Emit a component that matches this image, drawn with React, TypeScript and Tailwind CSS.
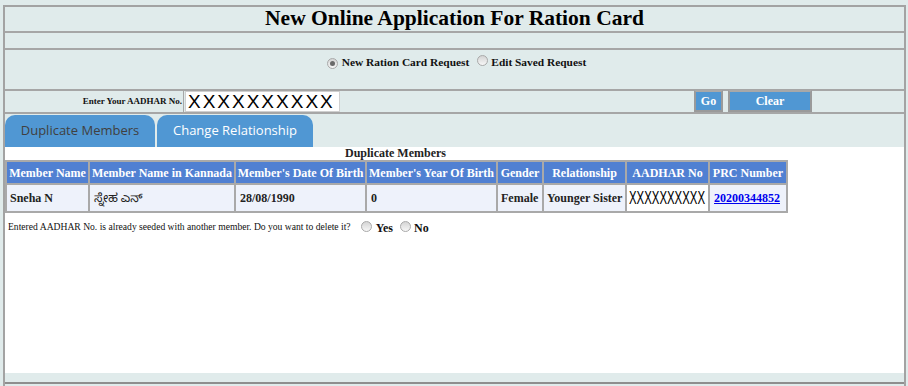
import React from "react";

function Radio({ checked }: { checked?: boolean }) {
  return (
    <span className="inline-flex items-center justify-center w-[11px] h-[11px] rounded-full border border-[#a9a9a9] bg-linear-to-b from-[#d4d4d4] to-[#f7f7f7] shrink-0">
      {checked ? <span className="block w-[5px] h-[5px] rounded-full bg-[#6a6a6a]" /> : null}
    </span>
  );
}

const serif = "font-['Liberation_Serif','Times_New_Roman',serif]";

export default function App() {
  const headers = [
    "Member Name",
    "Member Name in Kannada",
    "Member's Date Of Birth",
    "Member's Year Of Birth",
    "Gender",
    "Relationship",
    "AADHAR No",
    "PRC Number",
  ];
  const widths = [83, 146, 131, 131, 46, 83, 83, 78];
  return (
    <div className={`w-[908px] h-[386px] overflow-hidden bg-[#e0ebeb] pt-[5px] ${serif}`}>
      <div className="ml-[3px] w-[903px] h-[381px] border-l-2 border-r-2 border-t-2 border-[#a3a3a3] flex flex-col">
        {/* Title */}
        <div className="h-[26px] border-b-2 border-[#a6a6a6] flex items-center justify-center">
          <h1 className="text-[21.5px] font-bold text-black leading-none">
            New Online Application For Ration Card
          </h1>
        </div>
        {/* empty row */}
        <div className="h-[17px] border-b-2 border-[#a6a6a6]" />
        {/* radio row */}
        <div className="h-[41px] border-b-2 border-[#a6a6a6] flex justify-center pt-[6px]">
          <div className="flex items-center h-[14px] text-[11.4px] font-bold text-[#111] ml-[4px]">
            <Radio checked />
            <span className="ml-[4px]">New Ration Card Request</span>
            <span className="ml-[8px]">
              <Radio />
            </span>
            <span className="ml-[3px]">Edit Saved Request</span>
          </div>
        </div>
        {/* aadhar row */}
        <div className="h-[23px] border-b-2 border-[#a6a6a6] flex items-stretch">
          <div className="w-[179px] border-r border-[#a6a6a6] flex items-center justify-end pr-[1px]">
            <span className="text-[9px] font-bold text-[#111] leading-none">Enter Your AADHAR No.</span>
          </div>
          <div className="w-[155px] flex items-center ml-[1px]">
            <div className="w-[155px] h-[21px] bg-white border border-[#cfcfcf] flex items-center pl-[2px] overflow-hidden">
              <span className="font-['Liberation_Sans',Arial,sans-serif] text-[19px] tracking-[2px] text-black leading-none">
                XXXXXXXXXX
              </span>
            </div>
          </div>
          <div className="flex-1 flex items-end pl-[354px] gap-[5px]">
            <button className="w-[29px] h-[22px] bg-[#5097d3] border-2 border-[#9a9a9a] border-t-[#a8a8a8] text-white text-[12px] font-bold leading-none">
              Go
            </button>
            <button className="w-[84px] h-[22px] bg-[#5097d3] border-2 border-[#9a9a9a] border-t-[#a8a8a8] text-white text-[12px] font-bold leading-none">
              Clear
            </button>
          </div>
        </div>
        {/* tabs */}
        <div className="h-[33px] flex items-end gap-[2px] pt-[1px] font-['Open_Sans','Noto_Sans',sans-serif] text-[13px]">
          <div className="w-[150px] h-[32px] rounded-t-[10px] bg-[#5097d3] flex items-center justify-center text-[#404040]">
            Duplicate Members
          </div>
          <div className="w-[156px] h-[32px] rounded-t-[10px] bg-[#5097d3] flex items-center justify-center text-white">
            Change Relationship
          </div>
        </div>
        {/* content */}
        <div className="h-[226px] bg-white">
          <div className="w-[781px]">
            <div className="h-[13px] text-center text-[12px] font-bold text-[#222] leading-[13px]">
              Duplicate Members
            </div>
            <table className="table-fixed border-collapse w-[781px] text-[12px]">
              <colgroup>
                {widths.map((w, i) => (
                  <col key={i} style={{ width: w }} />
                ))}
              </colgroup>
              <thead>
                <tr className="h-[23px] bg-[#5080d2]">
                  {headers.map((h) => (
                    <th key={h} className="border-2 border-[#a9a9a9] text-white font-bold whitespace-nowrap px-0 text-center leading-none">
                      {h}
                    </th>
                  ))}
                </tr>
              </thead>
              <tbody>
                <tr className="h-[28px] bg-[#eef2fb] text-[#222] font-bold">
                  <td className="border-2 border-[#a9a9a9] pl-[3px] whitespace-nowrap">Sneha N</td>
                  <td className="border-2 border-[#a9a9a9] pl-[4px] whitespace-nowrap font-normal font-['Noto_Sans','Noto_Sans_Kannada',sans-serif] text-[12px]">
                    ಸ್ನೇಹ ಎನ್
                  </td>
                  <td className="border-2 border-[#a9a9a9] pl-[4px] whitespace-nowrap">28/08/1990</td>
                  <td className="border-2 border-[#a9a9a9] pl-[4px] whitespace-nowrap">0</td>
                  <td className="border-2 border-[#a9a9a9] pl-[3px] whitespace-nowrap">Female</td>
                  <td className="border-2 border-[#a9a9a9] pl-[3px] whitespace-nowrap">Younger Sister</td>
                  <td className="border-2 border-[#a9a9a9] bg-white pl-[2px] whitespace-nowrap overflow-hidden">
                    <span className="inline-block w-[78px] overflow-visible">
                      <span className="inline-block origin-left scale-x-[0.6] font-['Liberation_Sans',Arial,sans-serif] text-[19px] text-black font-normal leading-none">
                        XXXXXXXXXX
                      </span>
                    </span>
                  </td>
                  <td className="border-2 border-[#a9a9a9] pl-[4px] whitespace-nowrap">
                    <a href="#" className="text-[#0000ee] underline">20200344852</a>
                  </td>
                </tr>
              </tbody>
            </table>
            <div className="flex items-center pl-[3px] pt-[1px] text-[#111]">
              <span className="text-[9.6px] leading-none">
                Entered AADHAR No. is already seeded with another member. Do you want to delete it?
              </span>
              <span className="ml-[10px] mt-[1px]"><Radio /></span>
              <span className="ml-[4px] text-[12px] font-bold mt-[3px] leading-none">Yes</span>
              <span className="ml-[7px] mt-[1px]"><Radio /></span>
              <span className="ml-[3px] text-[12px] font-bold mt-[3px] leading-none">No</span>
            </div>
          </div>
        </div>
        {/* bottom */}
        <div className="h-[9px]" />
        <div className="h-[2px] bg-[#8e8e8e]" />
      </div>
    </div>
  );
}
